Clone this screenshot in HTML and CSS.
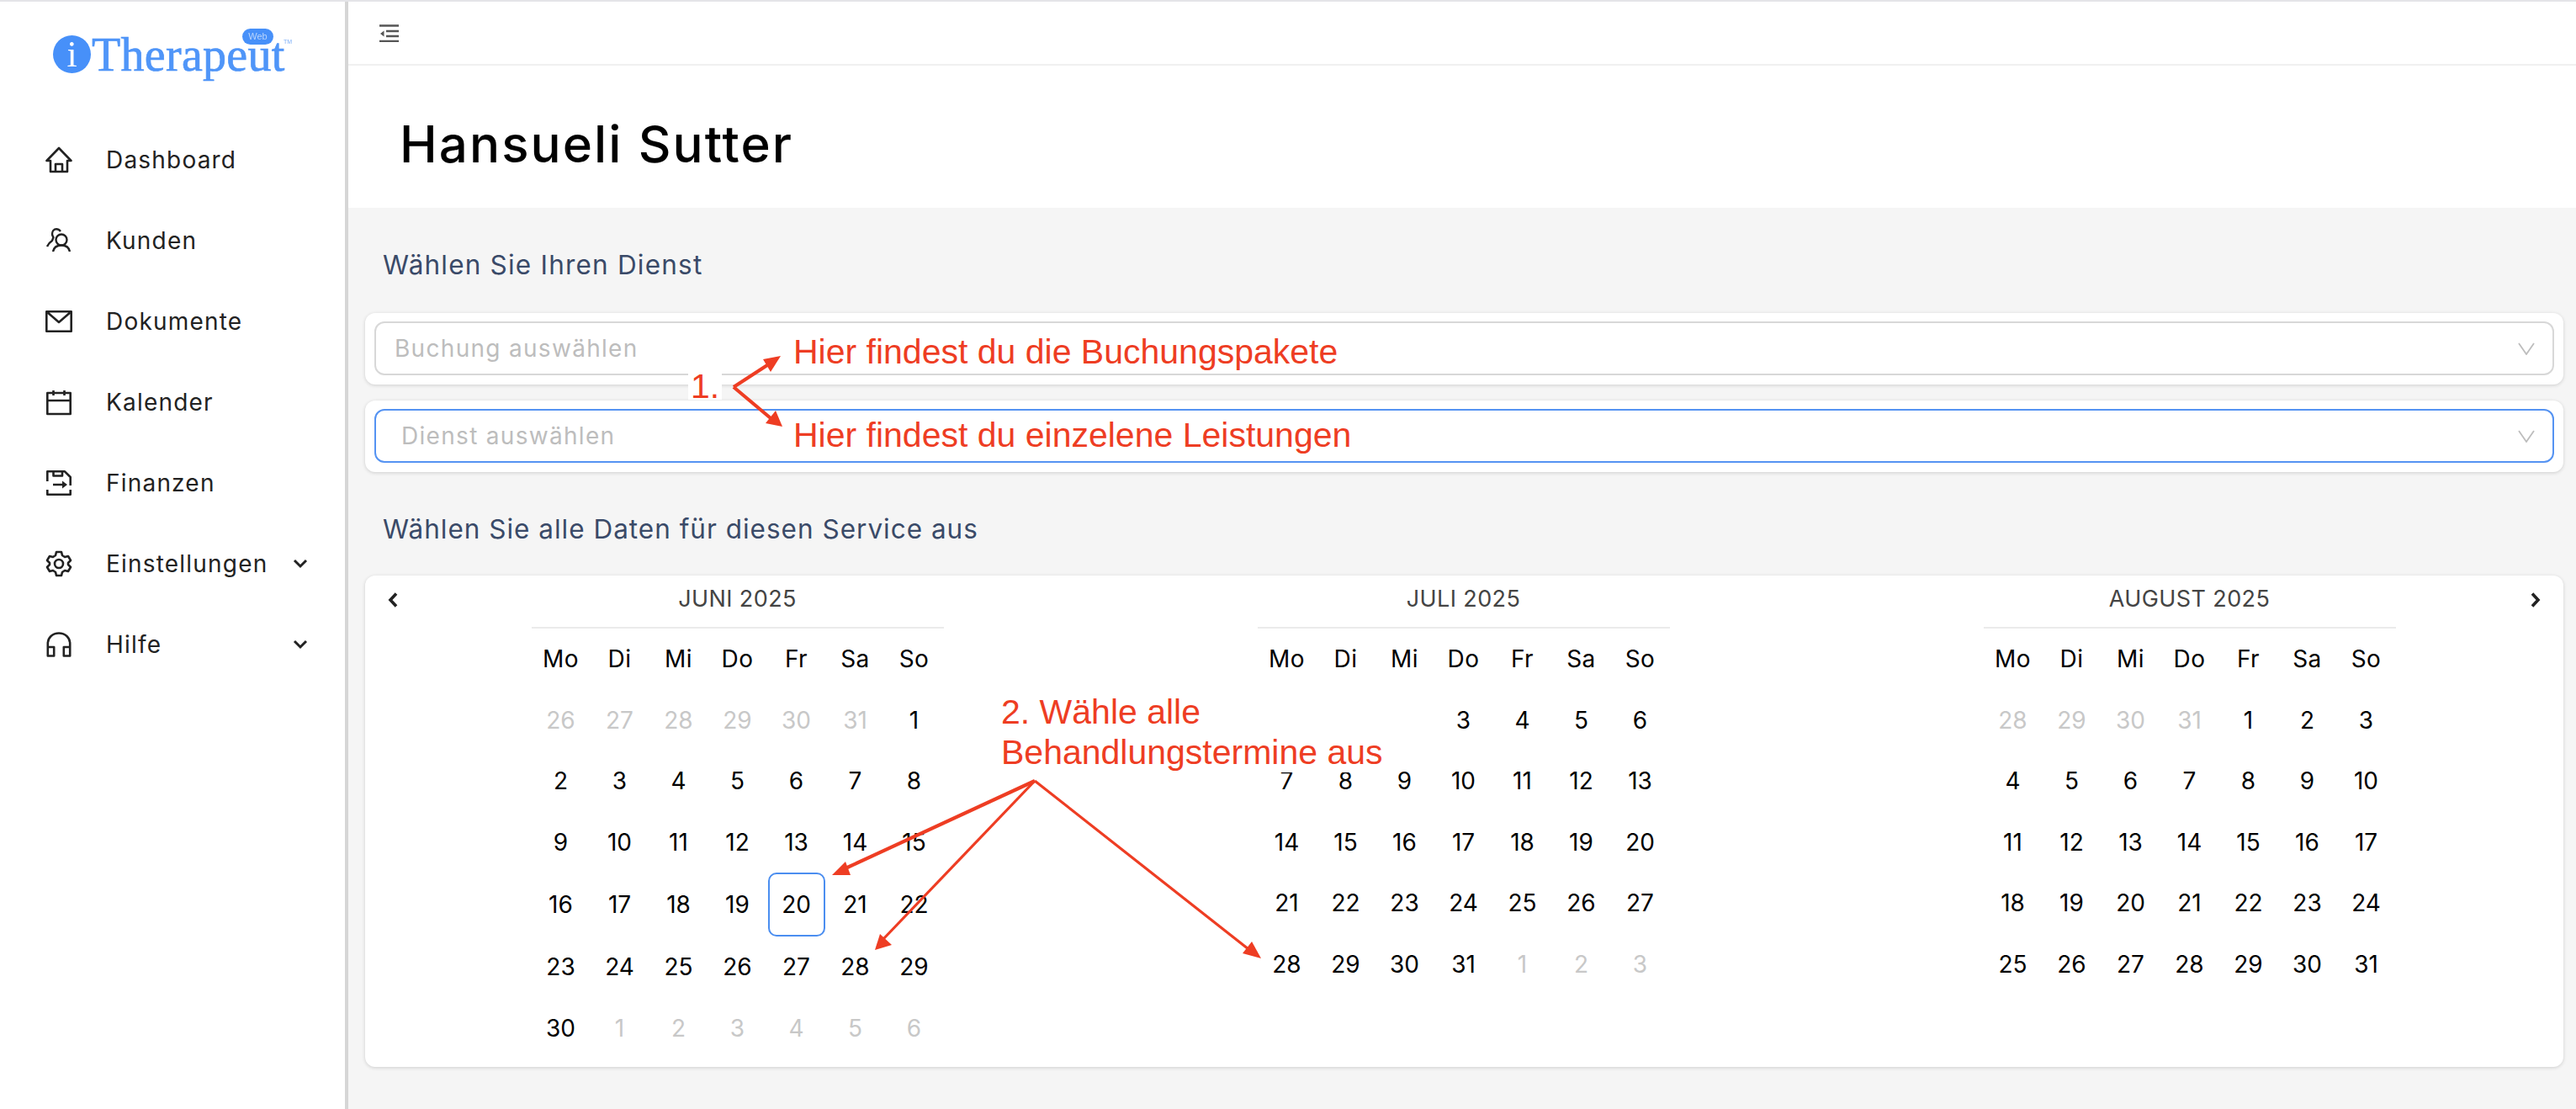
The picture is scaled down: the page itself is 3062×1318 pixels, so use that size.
FILE: index.html
```html
<!DOCTYPE html>
<html lang="de">
<head>
<meta charset="utf-8">
<title>iTherapeut</title>
<link rel="stylesheet" href="styles.css">
</head>
<body>
<div class="app">
  <aside class="sidebar">
    <div class="logo">
      <span class="logo-dot">i</span><span class="logo-word">Therapeut</span>
      <span class="logo-pill">Web</span><span class="logo-tm">TM</span>
    </div>
    <nav class="nav">
      <a class="nav-item"><svg class="nav-icon" viewBox="0 0 32 32"><path d="M16 2 1.500 17h4.500v13h20V17h4.500zM12 30v-9h8v9"/></svg><span>Dashboard</span></a>
      <a class="nav-item"><svg class="nav-icon thin" viewBox="0 0 32 32"><circle cx="19" cy="15" r="6.500"/><path d="M9 29c1-5 4-7.500 10-7.500s9 2.500 10 7.500M18 5c-1.500-2-3-2.800-5-2.800-3 0-5 2.800-5 5.800 0 2 1 3 1.500 4L8 16c-3 2-5 4.500-6 7"/></svg><span>Kunden</span></a>
      <a class="nav-item"><svg class="nav-icon" viewBox="0 0 32 32"><path d="M1.300 4.300h29.400v23.400H1.300zM1.300 4.300 16 17 30.700 4.300"/></svg><span>Dokumente</span></a>
      <a class="nav-item"><svg class="nav-icon" viewBox="0 0 32 32"><path d="M2.300 5h27.400v25H2.300zM2.300 14h27.400M9.500 2v6M22.500 2v6"/></svg><span>Kalender</span></a>
      <a class="nav-item"><svg class="nav-icon" viewBox="0 0 32 32"><path d="M2.300 14V2.300H23l6.700 6.700v10M9.500 2.300V7.500h10.500V2.300M2.300 24v5.700h27.400V24M9 18h13"/><path class="solid" d="m20 13.500 6 4.500-6 4.500z"/></svg><span>Finanzen</span></a>
      <a class="nav-item"><svg class="nav-icon" viewBox="0 0 32 32"><circle cx="16" cy="16" r="5"/><path d="M13 2h6l1 4 3 2 4-1 3 5-3 3v2l3 3-3 5-4-1-3 2-1 4h-6l-1-4-3-2-4 1-3-5 3-3v-2L2 12l3-5 4 1 3-2z"/></svg><span>Einstellungen</span><svg class="nav-chevron" viewBox="0 0 18 12"><path d="m2 2 7 7 7-7"/></svg></a>
      <a class="nav-item"><svg class="nav-icon" viewBox="0 0 32 32"><path d="M2.800 29V15C2.800 7.500 8.500 2.500 16 2.500S29.200 7.500 29.200 15v14M2.800 19h7.400v10.500H2.800zM21.800 19h7.400v10.500h-7.400z"/></svg><span>Hilfe</span><svg class="nav-chevron" viewBox="0 0 18 12"><path d="m2 2 7 7 7-7"/></svg></a>
    </nav>
  </aside>

  <main class="main">
    <div class="topbar">
      <svg class="toggle" viewBox="0 0 24 21"><path d="M0 1.500h23M8 8h15M8 14h15M0 20h23"/><path class="solid" d="M1 11 5.500 7.500v7z"/></svg>
    </div>
    <header class="page-head"><h1>Hansueli Sutter</h1></header>

    <section class="content">
      <h2 class="section-title">Wählen Sie Ihren Dienst</h2>
      <div class="card select-card">
        <div class="select"><span class="placeholder">Buchung auswählen</span><svg class="select-arrow" viewBox="0 0 20 15"><path d="m1 1 9 13 9-13"/></svg></div>
      </div>
      <div class="card select-card">
        <div class="select is-focus"><span class="placeholder">Dienst auswählen</span><svg class="select-arrow" viewBox="0 0 20 15"><path d="m1 1 9 13 9-13"/></svg></div>
      </div>
      <h2 class="section-title second">Wählen Sie alle Daten für diesen Service aus</h2>

      <div class="card calendar">
        <svg class="cal-nav prev" viewBox="0 0 12 18"><path d="M10 1.500 3 9l7 7.500"/></svg>
        <svg class="cal-nav next" viewBox="0 0 12 18"><path d="m2 1.500 7 7.500-7 7.500"/></svg>

        <div class="month">
          <div class="month-title">JUNI 2025</div>
          <div class="days">
            <b>Mo</b><b>Di</b><b>Mi</b><b>Do</b><b>Fr</b><b>Sa</b><b>So</b>
            <i>26</i><i>27</i><i>28</i><i>29</i><i>30</i><i>31</i><span>1</span>
            <span>2</span><span>3</span><span>4</span><span>5</span><span>6</span><span>7</span><span>8</span>
            <span>9</span><span>10</span><span>11</span><span>12</span><span>13</span><span>14</span><span>15</span>
            <span>16</span><span>17</span><span>18</span><span>19</span><span class="selected">20</span><span>21</span><span>22</span>
            <span>23</span><span>24</span><span>25</span><span>26</span><span>27</span><span>28</span><span>29</span>
            <span>30</span><i>1</i><i>2</i><i>3</i><i>4</i><i>5</i><i>6</i>
          </div>
        </div>

        <div class="month">
          <div class="month-title">JULI 2025</div>
          <div class="days">
            <b>Mo</b><b>Di</b><b>Mi</b><b>Do</b><b>Fr</b><b>Sa</b><b>So</b>
            <em></em><em></em><em></em><span>3</span><span>4</span><span>5</span><span>6</span>
            <span>7</span><span>8</span><span>9</span><span>10</span><span>11</span><span>12</span><span>13</span>
            <span>14</span><span>15</span><span>16</span><span>17</span><span>18</span><span>19</span><span>20</span>
            <span>21</span><span>22</span><span>23</span><span>24</span><span>25</span><span>26</span><span>27</span>
            <span>28</span><span>29</span><span>30</span><span>31</span><i>1</i><i>2</i><i>3</i>
          </div>
        </div>

        <div class="month">
          <div class="month-title">AUGUST 2025</div>
          <div class="days">
            <b>Mo</b><b>Di</b><b>Mi</b><b>Do</b><b>Fr</b><b>Sa</b><b>So</b>
            <i>28</i><i>29</i><i>30</i><i>31</i><span>1</span><span>2</span><span>3</span>
            <span>4</span><span>5</span><span>6</span><span>7</span><span>8</span><span>9</span><span>10</span>
            <span>11</span><span>12</span><span>13</span><span>14</span><span>15</span><span>16</span><span>17</span>
            <span>18</span><span>19</span><span>20</span><span>21</span><span>22</span><span>23</span><span>24</span>
            <span>25</span><span>26</span><span>27</span><span>28</span><span>29</span><span>30</span><span>31</span>
          </div>
        </div>
      </div>
    </section>
  </main>
</div>

<div class="note note-a">Hier findest du die Buchungspakete</div>
<div class="note note-b">Hier findest du einzelene Leistungen</div>
<div class="note note-one">1.</div>
<div class="note note-two">2. Wähle alle<br>Behandlungstermine aus</div>
<svg class="arrows" viewBox="0 0 3062 1318">
  <g class="shaft">
    <path d="M872 460 912 434"/>
    <path d="M872 460 916 497"/>
    <path d="M1230 928 1005 1032"/>
    <path class="fine" d="M1230 928 1050 1116"/>
    <path class="fine" d="M1230 928 1484 1128"/>
  </g>
  <g class="head">
    <path d="M928 423 907 427 916 442z"/>
    <path d="M930 507 910 503 922 488z"/>
    <path d="M989 1040 1005 1024 1011 1040z"/>
    <path d="M1040 1129 1046 1110 1060 1123z"/>
    <path d="M1499 1139 1477 1133 1488 1119z"/>
  </g>
</svg>
</body>
</html>
```

FILE: styles.css
```css
* { box-sizing: border-box; }
html, body { margin: 0; height: 100%; }
body {
  position: relative;
  width: 3062px;
  height: 1318px;
  overflow: hidden;
  border-top: 2px solid #e4e4e8;
  background: #f5f5f5;
  font-family: "Inter", "Noto Sans", sans-serif;
  color: #1f1f1f;
}
.app { display: flex; height: 1316px; }

.sidebar {
  flex: 0 0 414px;
  background: #fff;
  border-right: 4px solid #d6d6d6;
}
.logo {
  position: relative;
  height: 140px;
  filter: blur(0.6px);
}
.logo-dot {
  position: absolute;
  left: 63px;
  top: 40px;
  width: 45px;
  height: 45px;
  border-radius: 50%;
  background: #4790f9;
  color: #fff;
  font: 400 44px/46px "Liberation Serif", serif;
  text-align: center;
}
.logo-word {
  position: absolute;
  left: 109px;
  top: 30px;
  color: #4f95f8;
  font: 400 56px/66px "Liberation Serif", serif;
  letter-spacing: 0.3px;
  -webkit-text-stroke: 0.7px #4f95f8;
}
.logo-pill {
  position: absolute;
  left: 288px;
  top: 32px;
  width: 37px;
  height: 19px;
  border-radius: 10px;
  background: #4790f9;
  color: #b9d4fc;
  font: 400 11px/19px "Liberation Sans", sans-serif;
  text-align: center;
}
.logo-tm {
  position: absolute;
  left: 337px;
  top: 44px;
  color: #7fb0f7;
  font: 400 7px/8px "Liberation Sans", sans-serif;
}
.nav { display: flex; flex-direction: column; }
.nav-item {
  display: flex;
  align-items: center;
  height: 96px;
  padding: 0 44px 0 54px;
  font-size: 28px;
  letter-spacing: 1.2px;
  color: #222;
}
.nav-item span { flex: 1; margin-left: 40px; }
.nav-icon {
  flex: 0 0 32px;
  width: 32px;
  height: 32px;
  fill: none;
  stroke: #222;
  stroke-width: 2.6;
  stroke-linejoin: round;
}
.nav-icon.thin { stroke-width: 2.4; }
.nav-icon .solid { fill: #222; stroke: none; }
.nav-chevron {
  width: 18px;
  height: 12px;
  fill: none;
  stroke: #222;
  stroke-width: 3;
}

.main { flex: 1; min-width: 0; display: flex; flex-direction: column; }
.topbar {
  flex: 0 0 76px;
  display: flex;
  align-items: center;
  padding-left: 37px;
  background: #fff;
  border-bottom: 2px solid #f0f0f0;
}
.toggle {
  width: 24px;
  height: 21px;
  fill: none;
  stroke: #555;
  stroke-width: 2.5;
}
.toggle .solid { fill: #555; stroke: none; }
.page-head {
  flex: 0 0 169px;
  display: flex;
  align-items: center;
  padding: 16px 0 0 61px;
  background: #fff;
}
.page-head h1 {
  margin: 0;
  font-size: 60px;
  font-weight: 500;
  letter-spacing: 2.1px;
  color: #000;
}

.content { flex: 1; padding: 46px 15px 0 20px; }
.section-title {
  margin: 0 0 35px 21px;
  height: 44px;
  font-size: 31.500px;
  line-height: 44px;
  font-weight: 400;
  letter-spacing: 1.2px;
  color: #3a4a68;
}
.section-title.second { margin-top: 46px; margin-bottom: 33px; letter-spacing: 1px; }
.card {
  background: #fff;
  border-radius: 12px;
  box-shadow: 0 1px 4px rgba(0, 0, 0, 0.16);
}
.select-card { padding: 10px 11px 11px; margin-bottom: 19px; height: 85px; }
.select {
  display: flex;
  align-items: center;
  justify-content: space-between;
  height: 64px;
  padding: 0 21px 0 22px;
  border: 2px solid #d8d8d8;
  border-radius: 12px;
}
.select.is-focus { border-color: #5593f2; padding-left: 30px; }
.placeholder { font-size: 28px; color: #bdbdbd; letter-spacing: 1.300px; }
.select-arrow {
  width: 20px;
  height: 15px;
  fill: none;
  stroke: #bdbdbd;
  stroke-width: 1.8;
}

.calendar {
  position: relative;
  display: grid;
  grid-template-columns: repeat(3, 863px);
  height: 584px;
  padding-left: 11px;
}
.cal-nav {
  position: absolute;
  top: 20px;
  width: 12px;
  height: 18px;
  fill: none;
  stroke: #222;
  stroke-width: 3.600;
}
.cal-nav.prev { left: 27px; }
.cal-nav.next { right: 27px; }
.month { display: flex; flex-direction: column; align-items: center; }
.month-title {
  width: 490px;
  height: 63px;
  padding-top: 10px;
  border-bottom: 2px solid #ebebeb;
  font-size: 27px;
  line-height: 36px;
  letter-spacing: 0.4px;
  text-align: center;
  color: #444;
}
.days {
  display: grid;
  grid-template-columns: repeat(7, 70px);
  grid-auto-rows: minmax(72.500px, auto);
  align-items: center;
  justify-items: center;
  font-size: 28px;
  color: #000;
}
.days b, .days span, .days i, .days em {
  font-weight: 400;
  font-style: normal;
  text-align: center;
}
.days b { letter-spacing: 0.4px; }
.days i { color: #c8c8c8; }
.days .selected {
  width: 68px;
  height: 76px;
  line-height: 72px;
  border: 2px solid #4b8ef0;
  border-radius: 10px;
}

.note {
  position: absolute;
  font-family: "Liberation Sans", Arial, sans-serif;
  font-size: 41px;
  color: #ee3d23;
}
.note-a { left: 943px; top: 393px; line-height: 46px; }
.note-b { left: 943px; top: 492px; line-height: 46px; }
.note-one {
  left: 818px;
  top: 441px;
  width: 40px;
  height: 32px;
  padding-left: 3px;
  background: #fff;
  line-height: 32px;
}
.note-two {
  left: 1180px;
  top: 820px;
  width: 480px;
  padding-left: 10px;
  background: #fff;
  line-height: 48px;
}
.arrows {
  position: absolute;
  left: 0;
  top: -2px;
  width: 3062px;
  height: 1318px;
  pointer-events: none;
}
.shaft { fill: none; stroke: #ee3d23; stroke-width: 4.200; }
.shaft .fine { stroke-width: 3.200; }
.head { fill: #ee3d23; }
```
